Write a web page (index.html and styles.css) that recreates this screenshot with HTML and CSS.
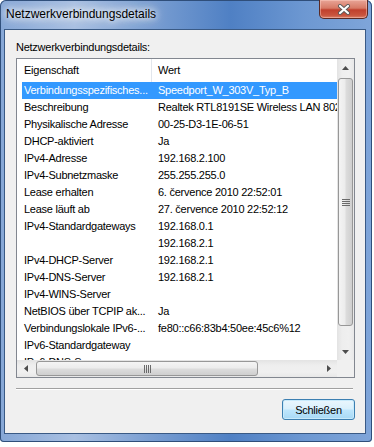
FILE: index.html
```html
<!DOCTYPE html>
<html lang="de">
<head>
    <meta charset="UTF-8">
    <meta name="viewport" content="width=device-width, initial-scale=1.0">
    <title>Netzwerkverbindungsdetails</title>
    <link rel="stylesheet" href="styles.css">
</head>
<body>
    <div class="window">
        <div class="titlebar">
            <span class="title">Netzwerkverbindungsdetails</span>
            <button class="close">
                <svg width="14" height="11" viewBox="0 0 14 11">
                    <path d="M3 2 L11 9 M11 2 L3 9" stroke="#5a5a5a" stroke-width="4" stroke-linecap="round"/>
                    <path d="M3 2 L11 9 M11 2 L3 9" stroke="#fff" stroke-width="2.2" stroke-linecap="round"/>
                </svg>
            </button>
        </div>

        <div class="client">
            <div class="caption">Netzwerkverbindungsdetails:</div>

            <div class="listview">
                <div class="list-content">
                    <div class="header">
                        <div class="hcell first">Eigenschaft</div>
                        <div class="hcell">Wert</div>
                    </div>
                    <div class="rows">
                        <div class="row selected"><span class="prop">Verbindungsspezifisches...</span><span class="val">Speedport_W_303V_Typ_B</span></div>
                        <div class="row"><span class="prop">Beschreibung</span><span class="val">Realtek RTL8191SE Wireless LAN 802.11n PCI-E NIC</span></div>
                        <div class="row"><span class="prop">Physikalische Adresse</span><span class="val">00-25-D3-1E-06-51</span></div>
                        <div class="row"><span class="prop">DHCP-aktiviert</span><span class="val">Ja</span></div>
                        <div class="row"><span class="prop">IPv4-Adresse</span><span class="val">192.168.2.100</span></div>
                        <div class="row"><span class="prop">IPv4-Subnetzmaske</span><span class="val">255.255.255.0</span></div>
                        <div class="row"><span class="prop">Lease erhalten</span><span class="val">6. července 2010 22:52:01</span></div>
                        <div class="row"><span class="prop">Lease läuft ab</span><span class="val">27. července 2010 22:52:12</span></div>
                        <div class="row"><span class="prop">IPv4-Standardgateways</span><span class="val">192.168.0.1</span></div>
                        <div class="row"><span class="prop"></span><span class="val">192.168.2.1</span></div>
                        <div class="row"><span class="prop">IPv4-DHCP-Server</span><span class="val">192.168.2.1</span></div>
                        <div class="row"><span class="prop">IPv4-DNS-Server</span><span class="val">192.168.2.1</span></div>
                        <div class="row"><span class="prop">IPv4-WINS-Server</span><span class="val"></span></div>
                        <div class="row"><span class="prop">NetBIOS über TCPIP ak...</span><span class="val">Ja</span></div>
                        <div class="row"><span class="prop">Verbindungslokale IPv6-...</span><span class="val">fe80::c66:83b4:50ee:45c6%12</span></div>
                        <div class="row"><span class="prop">IPv6-Standardgateway</span><span class="val"></span></div>
                        <div class="row"><span class="prop">IPv6-DNS-Server</span><span class="val"></span></div>
                    </div>
                </div>

                <!-- vertikale Scrollleiste -->
                <div class="vscroll">
                    <div class="arrow">
                        <svg width="7" height="4" viewBox="0 0 7 4"><polygon points="0,4 7,4 3.5,0" fill="#4d4d4d"/></svg>
                    </div>
                    <div class="track vtrack">
                        <div class="thumb vthumb">
                            <svg width="8" height="7" viewBox="0 0 8 7"><path d="M0 0.5H8M0 2.5H8M0 4.5H8M0 6.5H8" stroke="#6a6a6a" stroke-width="1"/></svg>
                        </div>
                    </div>
                    <div class="arrow">
                        <svg width="7" height="4" viewBox="0 0 7 4"><polygon points="0,0 7,0 3.5,4" fill="#4d4d4d"/></svg>
                    </div>
                </div>

                <!-- horizontale Scrollleiste -->
                <div class="hscroll">
                    <div class="arrow">
                        <svg width="4" height="7" viewBox="0 0 4 7"><polygon points="4,0 4,7 0,3.5" fill="#4d4d4d"/></svg>
                    </div>
                    <div class="track htrack">
                        <div class="thumb hthumb">
                            <svg width="7" height="8" viewBox="0 0 7 8"><path d="M0.5 0V8M2.5 0V8M4.5 0V8M6.5 0V8" stroke="#6a6a6a" stroke-width="1"/></svg>
                        </div>
                    </div>
                    <div class="arrow">
                        <svg width="4" height="7" viewBox="0 0 4 7"><polygon points="0,0 0,7 4,3.5" fill="#4d4d4d"/></svg>
                    </div>
                </div>
                <div class="corner"></div>
            </div>

            <div class="separator"></div>
            <div class="buttons">
                <button class="btn">Schließen</button>
            </div>
        </div>
    </div>
</body>
</html>
```

FILE: styles.css
```css
* {
    box-sizing: border-box;
}

body {
    margin: 0;
    background: #fff;
    font-family: "Liberation Sans", Arial, sans-serif;
}

/* Fensterrahmen (Aero) */
.window {
    width: 372px;
    height: 442px;
    display: flex;
    flex-direction: column;
    padding-bottom: 8px;
    border-radius: 6px 6px 4px 4px;
    background: linear-gradient(to right, #86a7d6 0%, #a9c0e2 20%, #7b9fd2 40%, #4f80c4 62%, #6d98d2 82%, #7fa5d9 100%);
    box-shadow: inset 0 0 0 1px #2f4e7a;
}

.titlebar {
    height: 29px;
    display: flex;
    align-items: flex-start;
    padding-left: 6px;
}

.title {
    margin-top: 7px;
    font-size: 12px;
    line-height: 14px;
    color: #000;
    text-shadow: 0 0 6px #fff, 0 0 10px #fff, 0 0 14px rgba(255, 255, 255, 0.9);
}

.close {
    margin-left: auto;
    margin-right: 4px;
    width: 49px;
    height: 19px;
    padding: 0;
    border: 1px solid #5a2a25;
    border-top: none;
    border-radius: 0 0 5px 5px;
    background: linear-gradient(#e8a597 0%, #d77a66 45%, #c0402d 55%, #c9553e 85%, #d9806a 100%);
    box-shadow: inset 0 0 0 1px rgba(255, 210, 200, 0.45);
    display: flex;
    align-items: center;
    justify-content: center;
}

/* Inhalt */
.client {
    flex: 1;
    margin: 0 6px 0 4px;
    border: 1px solid #3a5a85;
    background: #f0f0f0;
    padding: 10px 10px 0 11px;
    display: flex;
    flex-direction: column;
}

.caption {
    font-size: 11px;
    line-height: 14px;
    letter-spacing: -0.25px;
    color: #000;
}

.listview {
    margin-top: 4px;
    height: 320px;
    border: 1px solid #828790;
    background: #fff;
    display: grid;
    grid-template-columns: 1fr 17px;
    grid-template-rows: 1fr 17px;
    font-size: 11px;
    letter-spacing: -0.25px;
    color: #000;
}

.list-content {
    overflow: hidden;
}

.header {
    display: flex;
    height: 23px;
    line-height: 23px;
    white-space: nowrap;
}

.hcell {
    padding-left: 6px;
}

.hcell.first {
    width: 135px;
    padding-left: 7px;
    border-right: 1px solid #e2e6ec;
}

.rows {
    padding-left: 5px;
}

.row {
    display: flex;
    height: 17px;
    line-height: 17px;
    white-space: nowrap;
}

.row .prop {
    flex: none;
    width: 129px;
    padding-left: 2px;
    overflow: hidden;
}

.row .val {
    padding-left: 7px;
}

.row.selected {
    background: #3399ff;
    color: #fff;
}

/* Scrollleisten */
.vscroll {
    display: flex;
    flex-direction: column;
    background: linear-gradient(to right, #e3e3e3, #eeeeee 30%, #f0f0f0 70%, #e8e8e8);
}

.hscroll {
    display: flex;
    background: linear-gradient(#e3e3e3, #eeeeee 30%, #f0f0f0 70%, #e8e8e8);
}

.arrow {
    flex: none;
    width: 17px;
    height: 17px;
    display: flex;
    align-items: center;
    justify-content: center;
}

.track {
    flex: 1;
    display: flex;
}

.vtrack {
    flex-direction: column;
    padding-top: 2px;
}

.htrack {
    padding-left: 2px;
}

.thumb {
    display: flex;
    align-items: center;
    justify-content: center;
    border: 1px solid #979797;
    border-radius: 3px;
}

.vthumb {
    height: 248px;
    margin: 0 1px;
    background: linear-gradient(to right, #f4f4f4, #ececec 45%, #dcdcdc 55%, #cfcfcf);
}

.hthumb {
    width: 222px;
    margin: 1px 0;
    background: linear-gradient(#f4f4f4, #ececec 45%, #dcdcdc 55%, #cfcfcf);
}

.corner {
    background: #f0f0f0;
}

.separator {
    margin-top: 10px;
    margin-right: 2px;
    height: 2px;
    border-top: 1px solid #a0a0a0;
    border-bottom: 1px solid #fff;
}

.buttons {
    display: flex;
    justify-content: flex-end;
    margin-top: 9px;
}

.btn {
    width: 73px;
    height: 21px;
    padding: 0;
    font-family: "Liberation Sans", Arial, sans-serif;
    font-size: 11px;
    letter-spacing: -0.25px;
    color: #000;
    border: 1px solid #3c7fb1;
    border-radius: 3px;
    background: linear-gradient(#eaf6fd 0%, #d9f0fc 48%, #bee6fd 52%, #a7d9f5 100%);
    box-shadow: inset 0 0 0 1px #c8eafb;
}
```
